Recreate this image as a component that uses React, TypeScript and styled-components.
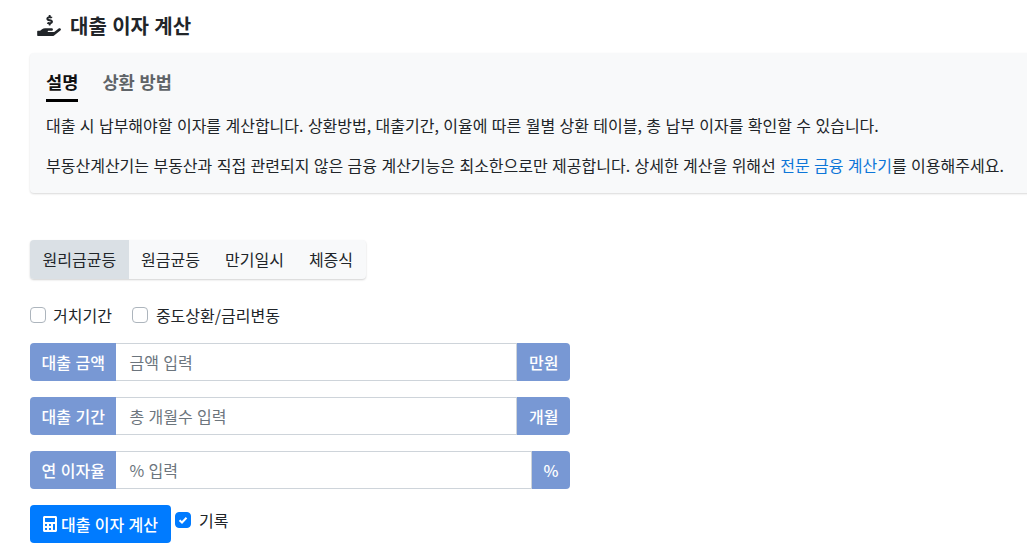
import React from "react";
import styled, { createGlobalStyle } from "styled-components";
import { FaHandHoldingUsd, FaCalculator } from "react-icons/fa";

const Global = createGlobalStyle`
  html, body { margin: 0; padding: 0; background: #fff; overflow: hidden; }
  * { box-sizing: border-box; }
  body { font-family: "Noto Sans CJK KR", "Noto Sans", sans-serif; font-size: 16px; color: #212529; line-height: 24px; word-spacing: 0.8px; }
`;
const Page = styled.div`
  width: 1027px; height: 549px; padding: 0 0 0 30px; overflow: hidden;
`;
const Title = styled.h1`
  margin: 0; height: 53px; padding: 0 0 2px 7px; display: flex; align-items: center; gap: 9px;
  font-size: 20px; font-weight: 700; color: #212529; line-height: 24px;
  svg { width: 24px; height: 21px; }
`;
const Panel = styled.section`
  width: 1010px; height: 140px; margin-right: -20px; padding: 12px 16px 0; background: #f8f9fa;
  border-radius: 4px 0 0 4px; box-shadow: 0 1px 2px rgba(0,0,0,.15);
`;
const TabRow = styled.div`
  display: flex; gap: 24px; height: 36px;
`;
const Tab = styled.div<{ $active?: boolean }>`
  font-size: 17.6px; font-weight: 700; line-height: 34px; height: 37px;
  color: ${(p) => (p.$active ? "#111" : "#5f6468")};
  border-bottom: ${(p) => (p.$active ? "3px solid #000" : "none")};
`;
const Para = styled.p`
  margin: 12px 0 16px; font-size: 16px; line-height: 24px; color: #212529; white-space: nowrap;
  & + & { margin-top: 16px; }
  a { color: #0d76d8; text-decoration: none; }
`;
const Segments = styled.div`
  display: inline-flex; margin-top: 47px; height: 39px; background: #f8f9fa; border-radius: 4px;
  box-shadow: 0 1px 2px rgba(0,0,0,.18); overflow: hidden; vertical-align: top;
`;
const Segment = styled.div<{ $active?: boolean }>`
  padding: 0 12.5px; line-height: 39px; font-size: 16px; color: #212529;
  background: ${(p) => (p.$active ? "#dae0e5" : "transparent")};
`;
const Options = styled.div`
  display: flex; gap: 20px; margin-top: 24px; height: 24px; align-items: center;
`;
const Check = styled.label`
  display: flex; align-items: center; gap: 8px; font-size: 16px;
  &:first-child { gap: 7px; }
`;
const Box = styled.span<{ $on?: boolean }>`
  width: 16px; height: 16px; border-radius: 4px; display: flex; align-items: center; justify-content: center;
  background: ${(p) => (p.$on ? "#007bff" : "#fff")};
  border: 1px solid ${(p) => (p.$on ? "#007bff" : "#adb5bd")};
`;
const Group = styled.div`
  display: flex; width: 540px; height: 38px; margin-top: 16px;
`;
const Addon = styled.div<{ $side: "l" | "r" }>`
  display: flex; align-items: center; justify-content: center; padding: 0 11.6px;
  background: #7898d4; color: #fff; font-size: 16px; font-weight: 500; white-space: nowrap;
  border-radius: ${(p) => (p.$side === "l" ? "4px 0 0 4px" : "0 4px 4px 0")};
`;
const Field = styled.div`
  flex: 1; border: 1px solid #ced4da; border-left: none; border-right: none; padding: 0 13px;
  line-height: 36px; font-size: 16px; color: #6c757d; background: #fff;
  box-shadow: inset -1px 0 0 #ced4da;
`;
const Actions = styled.div`
  display: flex; align-items: flex-start; margin-top: 16px;
`;
const Primary = styled.button`
  height: 38px; width: 141px; border: none; border-radius: 4px; background: #007bff; color: #fff;
  font: 500 16px "Noto Sans CJK KR", sans-serif; word-spacing: 0.8px; display: flex; align-items: center; justify-content: center; gap: 4px; padding: 0;
  svg { width: 14px; height: 16px; }
`;
const Record = styled(Check)`
  margin-left: 4px; height: 30px;
  &:first-child { gap: 8px; }
`;

const rows = [
  { l: "대출 금액", ph: "금액 입력", r: "만원" },
  { l: "대출 기간", ph: "총 개월수 입력", r: "개월" },
  { l: "연 이자율", ph: "% 입력", r: "%" },
];

export default function App() {
  return (
    <Page>
      <Global />
      <Title><FaHandHoldingUsd />대출 이자 계산</Title>
      <Panel>
        <TabRow>
          <Tab $active>설명</Tab>
          <Tab>상환 방법</Tab>
        </TabRow>
        <Para>대출 시 납부해야할 이자를 계산합니다. 상환방법, 대출기간, 이율에 따른 월별 상환 테이블, 총 납부 이자를 확인할 수 있습니다.</Para>
        <Para>부동산계산기는 부동산과 직접 관련되지 않은 금융 계산기능은 최소한으로만 제공합니다. 상세한 계산을 위해선 <a href="#">전문 금융 계산기</a>를 이용해주세요.</Para>
      </Panel>
      <Segments>
        <Segment $active>원리금균등</Segment>
        <Segment>원금균등</Segment>
        <Segment>만기일시</Segment>
        <Segment>체증식</Segment>
      </Segments>
      <Options>
        <Check><Box />거치기간</Check>
        <Check><Box />중도상환/금리변동</Check>
      </Options>
      {rows.map((r) => (
        <Group key={r.l}>
          <Addon $side="l">{r.l}</Addon>
          <Field>{r.ph}</Field>
          <Addon $side="r">{r.r}</Addon>
        </Group>
      ))}
      <Actions>
        <Primary><FaCalculator />대출 이자 계산</Primary>
        <Record>
          <Box $on>
            <svg width="10" height="10" viewBox="0 0 10 10"><path d="M1.5 5.2 4 7.5 8.5 2.8" fill="none" stroke="#fff" strokeWidth="2" /></svg>
          </Box>
          기록
        </Record>
      </Actions>
    </Page>
  );
}
